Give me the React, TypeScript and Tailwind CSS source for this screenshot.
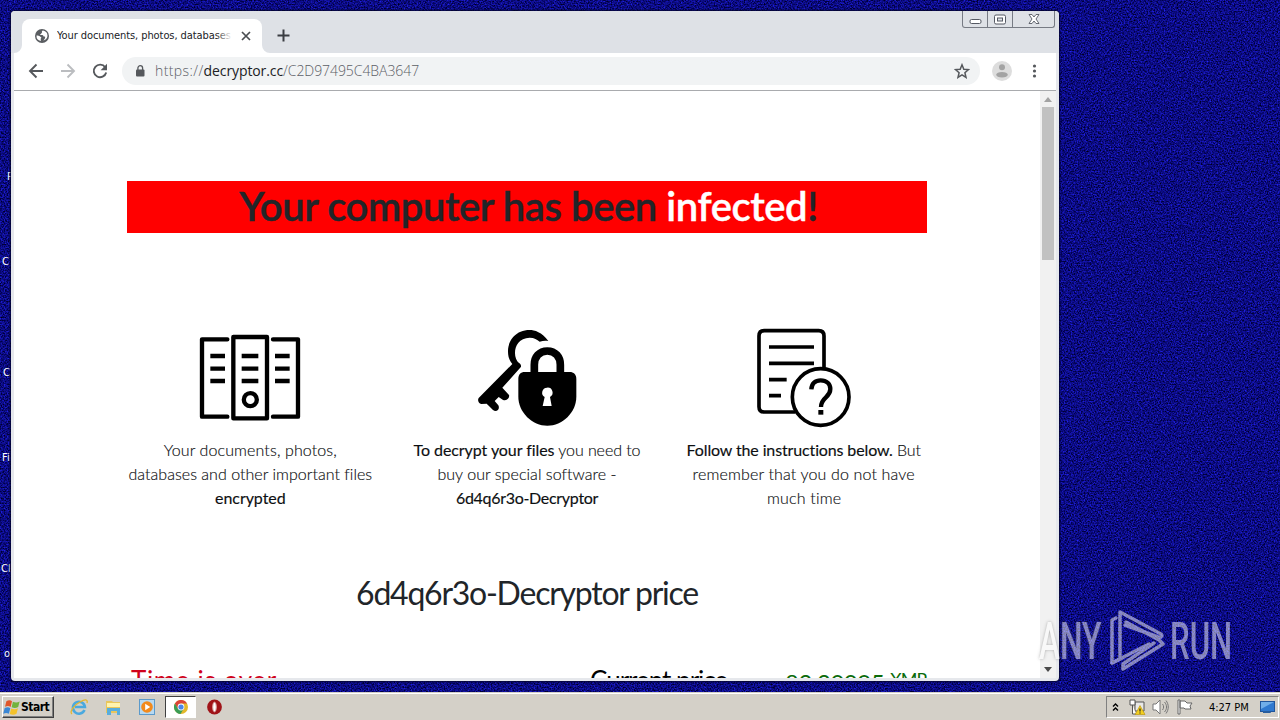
import type { ReactNode } from "react";

const desktopLabels = [
  { text: "P", className: "left-[7px] top-[170px]" },
  { text: "C", className: "left-[2px] top-[255px]" },
  { text: "C", className: "left-[3px] top-[366px]" },
  { text: "Fi", className: "left-[2px] top-[451px]" },
  { text: "Cl", className: "left-[1px] top-[562px]" },
  { text: "o", className: "left-[4px] top-[647px]" },
];

/* Noisy blue wallpaper */
const Wallpaper = () => (
  <svg className="absolute inset-0" width="1280" height="720">
    <filter id="grain" x="0" y="0" width="100%" height="100%" colorInterpolationFilters="sRGB">
      <feTurbulence type="fractalNoise" baseFrequency="0.7" numOctaves="2" seed="7" />
      <feColorMatrix values="0.25 0 0 0 -0.08  0.25 0 0 0 -0.08  1.25 0 0 0 -0.12  0 0 0 0 1" />
    </filter>
    <rect width="1280" height="720" fill="#08086c" />
    <rect width="1280" height="720" filter="url(#grain)" />
  </svg>
);

const GlobeIcon = () => (
  <svg width="14" height="14" viewBox="0 0 14 14">
    <circle cx="7" cy="7" r="7" fill="#5a5d61" />
    <path d="M8 1.6c-1 .4-1.300 1-1 1.600.2.600-.7.700-.8 1.300-.1.700-1.100.6-1.100 1.200 0 .7 1.900.1 2.700.5.7.400.5 1.300 1.300 1.400.9.1 1.200.3 1 1.100-.2 1.100-.9 2.200-2 2.900A5.500 5.500 0 0 0 12.500 7 5.600 5.600 0 0 0 8 1.600ZM1.500 6.500c1.300 0 3 .2 3.500.9.500.6 1.200.6 1.300 1.200.1.700-.7.800-.6 1.600.1.600.3 1 .1 1.900A5.500 5.500 0 0 1 1.500 6.500Z" fill="#fff" />
  </svg>
);

/* Window buttons: minimize, maximize, close */
const WindowControls = () => (
  <div className="flex h-[17px] w-[93px] rounded-b-[3px] border border-t-0 border-[#777b84]">
    <div className="flex w-[25px] items-center justify-center border-r border-[#777b84]">
      <svg width="13" height="12" viewBox="0 0 13 12">
        <rect x="1" y="6.500" width="11" height="4" rx="1.500" fill="#fff" stroke="#555963" />
      </svg>
    </div>
    <div className="flex w-[25px] items-center justify-center border-r border-[#777b84]">
      <svg width="12" height="11" viewBox="0 0 12 11">
        <rect x=".5" y="1" width="11" height="9" rx="1.500" fill="#fff" stroke="#555963" />
        <rect x="3.500" y="4" width="5" height="3" fill="#dee1e6" stroke="#555963" />
      </svg>
    </div>
    <div className="flex flex-1 items-center justify-center">
      <svg width="12" height="12" viewBox="0 0 12 12">
        <path d="M1 1.500h3l2 2.500 2-2.500h3L8 6l3 4.500H8L6 8l-2 2.500H1L4 6Z" fill="#fff" stroke="#555963" strokeWidth=".9" />
      </svg>
    </div>
  </div>
);

const TabStrip = () => (
  <div className="flex h-[42px] rounded-t-[4px] bg-[#dee1e6] pl-[11px] pr-1">
    <div className="relative mt-2 flex h-[34px] w-[240px] items-center rounded-t-lg bg-white pl-[13px]">
      <svg className="absolute bottom-0 -left-2" width="8" height="8"><path d="M8 0v8H0a8 8 0 0 0 8-8Z" fill="#fff" /></svg>
      <svg className="absolute bottom-0 -right-2" width="8" height="8"><path d="M0 0v8h8a8 8 0 0 1-8-8Z" fill="#fff" /></svg>
      <GlobeIcon />
      <div className="relative ml-2 w-[175px] overflow-hidden whitespace-nowrap pt-px font-['DejaVu_Sans_Condensed','DejaVu_Sans',sans-serif] text-[11px] tracking-[-0.08px] text-[#202226]">
        Your documents, photos, databases
        <div className="absolute inset-y-0 right-0 w-4 bg-gradient-to-r from-transparent to-white" />
      </div>
      <svg className="ml-[9px]" width="10" height="10" viewBox="0 0 10 10">
        <path d="m1 1 8 8M9 1 1 9" stroke="#4a4d51" strokeWidth="1.700" />
      </svg>
    </div>
    <svg className="ml-[15px] mt-[18px]" width="13" height="13" viewBox="0 0 13 13">
      <path d="M6.500 .5v12M.5 6.500h12" stroke="#3a3d42" strokeWidth="2" />
    </svg>
    <div className="ml-auto">
      <WindowControls />
    </div>
  </div>
);

const Toolbar = () => (
  <div className="mx-[3px] flex h-[38px] items-center border-b border-[#a9abae] bg-white pb-px pl-[14px]">
    <svg width="16" height="16" viewBox="0 0 16 16" fill="none" stroke="#55585c" strokeWidth="1.900">
      <path d="M15 8H2M8.500 1.500 2 8l6.500 6.500" />
    </svg>
    <svg className="ml-4" width="16" height="16" viewBox="0 0 16 16" fill="none" stroke="#bbbdc0" strokeWidth="1.900">
      <path d="M1 8h13M7.500 1.500 14 8l-6.500 6.500" />
    </svg>
    <svg className="ml-4" width="16" height="16" viewBox="0 0 16 16">
      <path d="M13.200 4.200A6.300 6.300 0 1 0 14.200 9.500" fill="none" stroke="#55585c" strokeWidth="1.900" />
      <path d="M15 .8v6.400H8.600Z" fill="#55585c" />
    </svg>
    <div className="ml-[14px] flex h-7 w-[858px] items-center rounded-full bg-[#f1f3f4] pl-[13px] pr-[10px]">
      <svg width="10" height="12" viewBox="0 0 10 12">
        <rect x="1" y="4.500" width="8.500" height="7" rx="1" fill="#55585c" />
        <path d="M2.900 5V3a2.300 2.300 0 0 1 4.700 0v2" fill="none" stroke="#55585c" strokeWidth="1.300" />
      </svg>
      <span className="ml-[10px] font-['Open_Sans',sans-serif] text-[14px] font-light leading-5 text-[#5c6066]">
        <span className="tracking-[0.4px]">https://</span>
        <span className="font-normal tracking-[-0.1px] text-[#202124]">decryptor.cc</span>
        <span className="tracking-[-0.06px]">/C2D97495C4BA3647</span>
      </span>
      <svg className="ml-auto" width="16" height="16" viewBox="0 0 16 16">
        <path d="m8 1.800 1.800 4.400 4.700.4-3.600 3.100 1.100 4.600-4-2.500-4 2.500 1.100-4.600L1.500 6.600l4.700-.4Z" fill="none" stroke="#55585c" strokeWidth="1.500" />
      </svg>
    </div>
    <svg className="ml-3" width="20" height="20" viewBox="0 0 20 20">
      <circle cx="10" cy="10" r="10" fill="#dddddd" />
      <circle cx="10" cy="6.300" r="3" fill="#a3a3a3" />
      <ellipse cx="10" cy="13.800" rx="5.800" ry="2.800" fill="#a3a3a3" />
    </svg>
    <svg className="ml-5" width="5" height="14" viewBox="0 0 5 14" fill="#55585c">
      <circle cx="2.500" cy="2" r="1.600" />
      <circle cx="2.500" cy="7" r="1.600" />
      <circle cx="2.500" cy="12" r="1.600" />
    </svg>
  </div>
);

const FilesIcon = () => (
  <svg width="140" height="110" viewBox="0 0 420 330" fill="none" stroke="#000" strokeWidth="13" strokeLinecap="round" strokeLinejoin="round">
    <path d="M142 58H66v232h76M279 58h75v232h-75M160 51h101v244H160Z" />
    <path d="M91 108h44M91 146h44M91 183h44M185 108h50M185 146h50M185 183h50M285 108h44M285 146h44M285 183h44" strokeLinecap="butt" />
    <circle cx="211" cy="239" r="19.500" />
  </svg>
);

const LockIcon = () => (
  <svg width="140" height="110" viewBox="-9 0 420 330">
    <path d="M265 63C246 36 223 30 209 30c-42 0-66 32-65 65 0 17 6 29 13 37L56 234c-4 6-1 16 8 18l16-1 19 19c10 8 22-2 16-14l-11-13 12-12 12 8c12 6 22-5 19-14l-20-22 55-61c3-4 0-11-5-13-21-17-17-75 32-76 14 0 22 5 30 12 10-3 18-3 26-2Z" />
    <path d="M223 170v-36c0-23 15-41 39-41s39 18 39 41v36" fill="none" stroke="#000" strokeWidth="23" />
    <path d="M194 156h135c12 0 20 8 20 20v54c0 47-42 87-87 87s-87-40-87-87v-54c0-12 7-20 19-20Z" />
    <path d="M261 203a15 15 0 0 1 9 28l5 27h-27l6-27a15 15 0 0 1 7-28Z" fill="#fff" />
  </svg>
);

const HelpIcon = () => (
  <svg width="140" height="110" viewBox="-18 0 420 330" fill="none" stroke="#000" strokeWidth="11">
    <path d="M252 145V48c0-10-6-16-16-16H73c-10 0-16 6-16 16v212c0 10 6 16 16 16h93" />
    <path d="M87 81h135M87 130h135M87 179h53M87 227h36" />
    <circle cx="242" cy="231" r="85" fill="#fff" />
    <path d="M214 208c1-18 12-27 28-27 18 0 29 11 29 26 0 27-28 23-28 54" strokeWidth="13" />
    <path d="M235 277h15" strokeWidth="14" />
  </svg>
);

type FeatureProps = { icon: ReactNode; children: ReactNode };

const Feature = ({ icon, children }: FeatureProps) => (
  <div className="flex flex-1 flex-col items-center">
    {icon}
    <div className="mt-2 whitespace-nowrap text-center text-base leading-6 text-[#0d0f11] [-webkit-text-stroke:0.15px_#0d0f11]">{children}</div>
  </div>
);

/* Page shown inside the browser window */
const Page = () => (
  <div className="min-w-0 flex-1 overflow-hidden bg-white pt-[90px] font-['Lato',sans-serif]">
    <div className="mx-auto w-[800px]">
      <h1 className="h-[52px] whitespace-nowrap bg-[red] pl-[3px] text-center text-[40px] font-semibold leading-[50px] tracking-[-0.43px] text-[#212529] [-webkit-text-stroke:0.4px]">
        Your computer has been <span className="text-white">infected</span>!
      </h1>
      <div className="mt-[87px] flex gap-[30px]">
        <Feature icon={<FilesIcon />}>
          <p className="font-light tracking-[0.12px]">Your documents, photos,</p>
          <p className="font-light tracking-[0.03px]">databases and other important files</p>
          <p className="tracking-[-0.05px]">encrypted</p>
        </Feature>
        <Feature icon={<LockIcon />}>
          <p className="font-light tracking-[-0.07px]"><span className="font-normal">To decrypt your files</span> you need to</p>
          <p className="font-light tracking-[0.05px]">buy our special software -</p>
          <p className="tracking-[-0.3px]">6d4q6r3o-Decryptor</p>
        </Feature>
        <Feature icon={<HelpIcon />}>
          <p className="font-light tracking-[-0.13px]"><span className="font-normal">Follow the instructions below.</span> But</p>
          <p className="font-light tracking-[0.15px]">remember that you do not have</p>
          <p className="pl-px font-light tracking-[0.2px]">much time</p>
        </Feature>
      </div>
      <h2 className="mt-[64px] whitespace-nowrap text-center text-[32px] leading-[38px] tracking-[-1.25px] text-[#212529]">6d4q6r3o-Decryptor price</h2>
      <div className="mt-[51px] flex whitespace-nowrap pl-[4px] text-[26px] leading-[34px]">
        <span className="w-[459px] tracking-[0.65px] text-[#d0021b]">Time is over</span>
        <span className="w-[195px] tracking-[-1px] text-black">Current price</span>
        <span className="flex pt-[3px] text-[24px] tracking-[-0.5px] text-[#0b6b0b]">
          82.20095 <span className="-mt-[4px] ml-[6px] text-[18px] tracking-[-1px]">XMR</span>
        </span>
      </div>
    </div>
  </div>
);

const Scrollbar = () => (
  <div className="flex w-4 shrink-0 flex-col items-center bg-[#f1f1f1]">
    <svg className="mt-[6px]" width="8" height="5"><path d="M4 0 8 5H0Z" fill="#a3a3a3" /></svg>
    <div className="mt-[5px] h-[153px] w-3 bg-[#c1c1c1]" />
    <svg className="mt-auto mb-[6px]" width="8" height="5"><path d="M0 0h8L4 5Z" fill="#4a4a4a" /></svg>
  </div>
);

const BrowserWindow = () => (
  <div className="absolute left-[11px] top-[11px] flex h-[670px] w-[1048px] flex-col rounded-[4px] bg-[#e6e8ec] shadow-[0_0_2px_1px_#05052d]">
    <TabStrip />
    <Toolbar />
    <div className="mx-[3px] mb-[3px] flex min-h-0 flex-1">
      <Page />
      <Scrollbar />
    </div>
  </div>
);

/* ANY.RUN watermark */
const Watermark = () => (
  <div className="absolute left-[1039px] top-[609px] h-[64px] w-[194px] font-['Roboto',sans-serif] text-[52px] font-medium leading-[64px] text-white opacity-50">
    <span className="absolute left-0 top-px origin-left scale-x-[0.61] [text-shadow:0_0_4px_#666]">ANY</span>
    <svg className="absolute left-[70px] top-0" width="56" height="64" viewBox="0 0 56 64" fill="none" stroke="#fff" strokeWidth="3.500" strokeLinejoin="round" strokeLinecap="round">
      <path d="M7 9 3 11v43L40 35M11 50V3l41 22c2 2 0 4-3 3L16 16" />
      <path d="M14 59V55L45 34M14 60 54 35 50 31 17 13M3 54l10-5" />
    </svg>
    <span className="absolute left-[131px] top-px origin-left scale-x-[0.6]">RUN</span>
  </div>
);

const WindowsLogo = () => (
  <svg width="18" height="17" viewBox="0 0 16 15">
    <path d="M3 2c2-1.300 4-1 5 0L6.800 7c-1.500-1-3-1-5-.1Z" fill="#e0562a" />
    <path d="M8.800 2.400c2 1 4 1 6-.2L13.500 7c-2 1.200-4 1-5.800.2Z" fill="#72b33c" />
    <path d="M1.500 8c2-1 3.600-.9 5 .1l-1.300 5c-1.500-1-3-1.100-5-.1Z" fill="#3b87d4" />
    <path d="M7.300 8.300c2 1 4 1 6-.1L12 13c-2 1.200-4 1-6 .2Z" fill="#f4c22b" />
  </svg>
);

const Taskbar = () => (
  <div className="absolute inset-x-0 bottom-0 flex h-7 items-center border-t border-[#d4d0c8] bg-[#d4d0c8] pt-[1px] pl-[2px] font-['DejaVu_Sans_Condensed','DejaVu_Sans',sans-serif] shadow-[inset_0_1px_0_#fff]">
    <div className="flex h-[22px] w-[52px] items-center border border-t-white border-r-[#404040] border-b-[#404040] border-l-white shadow-[inset_-1px_-1px_0_#808080]">
      <WindowsLogo />
      <span className="text-[12px] font-bold tracking-[-0.5px] text-black">Start</span>
    </div>
    {/* Internet Explorer */}
    <svg className="ml-[16px]" width="18" height="18" viewBox="0 0 18 18" fill="none">
      <path d="M14.500 12a6 6 0 1 1 .4-3H5" stroke="#4aa9df" strokeWidth="2.600" />
      <path d="M2 16c-3-2 2-9 8-12 5-3 8-3 7 1" stroke="#e5b62d" strokeWidth="1.300" />
    </svg>
    {/* File explorer */}
    <svg className="ml-[17px]" width="17" height="17" viewBox="0 0 17 17">
      <path d="M1 2h6l1 1h7v11H1Z" fill="#e9c65c" />
      <path d="M2 4h13v4H2Z" fill="#fff3ae" />
      <path d="M2 9h13v7h-3v-4H6v4H2Z" fill="#59addd" />
    </svg>
    {/* Media player */}
    <svg className="ml-[17px]" width="16" height="16" viewBox="0 0 16 16">
      <rect x=".5" y=".5" width="15" height="15" fill="#b7d9f1" stroke="#5b9acb" />
      <circle cx="8" cy="8" r="5.800" fill="#f28a1c" />
      <path d="m6.200 4.800 5 3.200-5 3.200Z" fill="#fff" />
    </svg>
    <div className="ml-[10px] flex h-[22px] w-[31px] items-center justify-center border border-t-[#404040] border-r-white border-b-white border-l-[#404040] bg-white">
      <svg width="14" height="14" viewBox="0 0 14 14">
        <circle cx="7" cy="7" r="7" fill="#e3b82b" />
        <path d="M.9 3.500A7 7 0 0 1 13.100 3.500H7L4 8.700Z" fill="#db4437" />
        <path d="M.9 3.500A7 7 0 0 0 6.500 14l3.200-5.300H4Z" fill="#3a9c55" />
        <circle cx="7" cy="7" r="3.400" fill="#fff" />
        <circle cx="7" cy="7" r="2.600" fill="#4a86e8" />
      </svg>
    </div>
    {/* Opera */}
    <svg className="ml-[11px]" width="15" height="16" viewBox="0 0 15 16">
      <circle cx="7.500" cy="8" r="7.400" fill="#a01318" />
      <ellipse cx="7.500" cy="8" rx="1.800" ry="4.800" fill="#fff" stroke="#d9a0a0" />
    </svg>

    {/* Notification area */}
    <div className="mr-px ml-auto flex h-[22px] w-[173px] items-center border border-t-[#808080] border-r-white border-b-white border-l-[#808080] pl-[5px]">
      <svg width="7" height="9" viewBox="0 0 7 9" fill="none" stroke="#000" strokeWidth="1.400">
        <path d="m1 3.500 2.500-2.500L6 3.500M1 7.500 3.500 5 6 7.500" />
      </svg>
      <svg className="ml-[10px]" width="17" height="17" viewBox="0 0 17 17">
        <path d="M6 3h9v9H6Z" fill="#e8e8e8" stroke="#555" />
        <path d="M1 1h5v5H1ZM3.500 6v9H7" fill="#fff" stroke="#555" />
        <path d="M11 6.500 16 15.500H6.200Z" fill="#f3cf21" stroke="#b78f00" strokeWidth=".6" />
        <path d="M11 9.500v3M11 13.500v1" stroke="#222" strokeWidth="1.200" />
      </svg>
      <svg className="ml-[6px]" width="17" height="16" viewBox="0 0 17 16" stroke="#777" fill="none">
        <path d="M1 5h3l4-4v14l-4-4H1Z" fill="#fff" />
        <path d="M10.500 5c1.500 2 1.500 4 0 6M12.500 3c2.700 3 2.700 7 0 10M14 1.500c3 4 3 9 0 13" />
      </svg>
      <svg className="ml-[8px]" width="16" height="16" viewBox="0 0 16 16" fill="#fff" stroke="#666">
        <path d="M1 1h2v14H1ZM3 2h5l2 2h5l-2 3 1 3H8L7 9H3Z" />
      </svg>
      <span className="ml-[16px] whitespace-nowrap pt-[2px] text-[11px] tracking-[-0.02px] text-black">4:27 PM</span>
      <svg className="mr-[3px] ml-auto" width="15" height="14" viewBox="0 0 15 14">
        <rect x=".5" y="1.500" width="14" height="10" fill="#2f79cf" stroke="#20559b" />
        <path d="M1 2h13L1 9Z" fill="#70aee9" />
        <path d="M3 11h7l1 2H3Z" fill="#285e9f" />
      </svg>
    </div>
  </div>
);

const App = () => {
  return (
    <div className="relative h-[720px] w-[1280px] overflow-hidden bg-[#08086c]">
      <Wallpaper />
      {desktopLabels.map((label, i) => (
        <span key={i} className={`absolute font-['DejaVu_Sans_Condensed','DejaVu_Sans',sans-serif] text-[11px] leading-[14px] text-white ${label.className}`}>
          {label.text}
        </span>
      ))}
      <BrowserWindow />
      <Watermark />
      <Taskbar />
    </div>
  );
};

export default App;
